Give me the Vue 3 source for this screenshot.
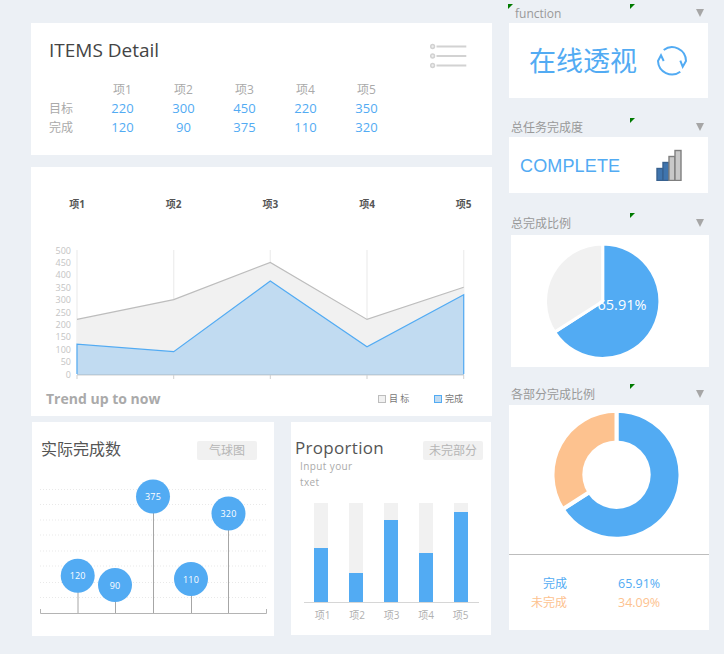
<script setup>
const items = ['项1', '项2', '项3', '项4', '项5']
const target = [220, 300, 450, 220, 350]
const done = [120, 90, 375, 110, 320]

const xs = [77, 173.7, 270.3, 367, 463.7]
const yOf = (v) => 374 - v * 0.248
const line = (d) => d.map((v, i) => `${xs[i]},${yOf(v)}`).join(' ')
const area = (d) => `77,374 ${line(d)} 463.7,374`
const yTicks = [0, 50, 100, 150, 200, 250, 300, 350, 400, 450, 500]

const balloons = [
  { x: 78, cx: 77.7, cy: 575.7, v: 120 },
  { x: 115.5, cx: 115, cy: 585, v: 90 },
  { x: 153.5, cx: 153, cy: 496.5, v: 375 },
  { x: 191.5, cx: 191, cy: 579, v: 110 },
  { x: 228.5, cx: 228.5, cy: 513.5, v: 320 }
]
const gridY = [489.5, 504.5, 520, 535, 551, 566, 582.5, 597.5]

const barHeights = [54.5, 29.5, 83, 49.5, 91]

const polar = (cx, cy, r, deg) => {
  const a = (deg * Math.PI) / 180
  return [cx + r * Math.sin(a), cy - r * Math.cos(a)]
}
const sector = (cx, cy, r, from, to) => {
  const [x1, y1] = polar(cx, cy, r, from)
  const [x2, y2] = polar(cx, cy, r, to)
  const large = to - from > 180 ? 1 : 0
  return `M${cx} ${cy}L${x1} ${y1}A${r} ${r} 0 ${large} 1 ${x2} ${y2}Z`
}
const split = 65.91 * 3.6
const pieBlue = sector(602.7, 301.2, 57.2, 0, split)
const pieGray = sector(602.7, 301.2, 57.2, split, 360)
const donutBlue = sector(616.5, 474.7, 64, 0, split)
const donutOrange = sector(616.5, 474.7, 64, split, 360)
</script>

<template>
  <div class="page">
    <div class="left">
      <section class="card detail">
        <div class="detail-head">
          <h1 class="detail-title">ITEMS Detail</h1>
          <svg class="list-icon" width="38" height="26" viewBox="0 0 38 26" aria-hidden="true">
            <g fill="#eeeeee" stroke="#d2d2d2">
              <circle cx="2.6" cy="3.5" r="1.9" stroke-width="1.5" />
              <circle cx="2.6" cy="13" r="1.9" stroke-width="1.5" />
              <circle cx="2.6" cy="22.5" r="1.9" stroke-width="1.5" />
              <path d="M6.5 3.5H36.3M6.5 13H36.3M6.5 22.5H36.3" stroke-width="1.8" fill="none" />
            </g>
          </svg>
        </div>
        <div class="table">
          <span></span>
          <span v-for="it in items" :key="it" class="th">{{ it }}</span>
          <span class="rowlabel">目标</span>
          <span v-for="(v, i) in target" :key="'t' + i" class="td">{{ v }}</span>
          <span class="rowlabel">完成</span>
          <span v-for="(v, i) in done" :key="'d' + i" class="td">{{ v }}</span>
        </div>
      </section>

      <section class="card trend">
        <svg class="trend-svg" width="461" height="249" viewBox="31 167 461 249">
          <text v-for="(it, i) in items" :key="it" class="cat" :x="xs[i]" y="208" text-anchor="middle">{{ it }}</text>
          <path v-for="x in xs" :key="x" :d="`M${x} 250V374`" stroke="#efefef" stroke-width="1.4" />
          <text v-for="t in yTicks" :key="t" class="tick" x="71" :y="yOf(t) + 3.5" text-anchor="end">{{ t }}</text>
          <polygon :points="area(target)" fill="#f1f1f1" />
          <polyline :points="line(target)" fill="none" stroke="#bdbdbd" stroke-width="1.2" />
          <polygon :points="area(done)" fill="#c1dbf1" />
          <polyline :points="`77,374 ${line(done)} 463.7,374`" fill="none" stroke="#52abf3" stroke-width="1.2" />
          <path d="M77 374.5H464" stroke="#9cc6e8" stroke-width="1" />
          <path d="M77 375H464" stroke="#cfcfcf" stroke-width="1" />
          <path v-for="x in xs" :key="'k' + x" :d="`M${x} 375V379`" stroke="#cfcfcf" stroke-width="1" />
          <text class="trend-title" x="46" y="404">Trend up to now</text>
          <rect x="378.5" y="395.5" width="7" height="7" fill="#f1f1f1" stroke="#bdbdbd" />
          <text class="legend" x="389" y="402">目 标</text>
          <rect x="434.5" y="395.5" width="7" height="7" fill="#c1dbf1" stroke="#52abf3" />
          <text class="legend" x="445" y="402">完成</text>
        </svg>
      </section>

      <div class="bottom">
        <section class="card balloon">
          <div class="card-head">
            <h2 class="cn-title">实际完成数</h2>
            <span class="badge">气球图</span>
          </div>
          <svg class="balloon-svg" width="242" height="171" viewBox="32 465 242 171">
            <path v-for="y in gridY" :key="y" :d="`M40 ${y}H267`" stroke="#e9e9e9" stroke-width="1" stroke-dasharray="1 2" />
            <path d="M40.5 609V613.5H266.5V609" fill="none" stroke="#b4b4b4" stroke-width="1" />
            <g v-for="b in balloons" :key="b.v">
              <path :d="`M${b.x} ${b.cy}V613`" stroke="#a6a6a6" stroke-width="1" />
              <circle :cx="b.cx" :cy="b.cy" r="17" fill="#52abf3" />
              <text class="bubble" :x="b.cx" :y="b.cy + 3.5" text-anchor="middle">{{ b.v }}</text>
            </g>
          </svg>
        </section>

        <section class="card proportion">
          <div class="card-head prop-head">
            <h2 class="prop-title">Proportion</h2>
            <span class="badge">未完部分</span>
          </div>
          <p class="input-text">Input your<br />txet</p>
          <div class="bars">
            <div v-for="(h, i) in barHeights" :key="i" class="bar">
              <div class="bar-fill" :style="{ height: h + '%' }"></div>
            </div>
          </div>
          <div class="bar-labels">
            <span v-for="it in items" :key="it">{{ it }}</span>
          </div>
        </section>
      </div>
    </div>

    <div class="right">
      <i class="mark m1"></i><i class="mark m2"></i><i class="mark m3"></i><i class="mark m4"></i><i class="mark m5"></i>

      <div class="head h1"><span>function</span><i class="caret"></i></div>
      <div class="panel p-func">
        <span class="func-text">在线透视</span>
        <svg width="34" height="34" viewBox="0 0 34 34" aria-hidden="true">
          <g fill="none" stroke="#52abf3" stroke-width="2">
            <path d="M8.7 6A14 14 0 0 1 31 17L27.7 22.7L25.3 16.7" />
            <path d="M25.3 27.7A14 14 0 0 1 3 17L6 11.3L8.7 17" />
          </g>
        </svg>
      </div>

      <div class="head h2"><span>总任务完成度</span><i class="caret"></i></div>
      <div class="panel p-complete">
        <span class="complete-text">COMPLETE</span>
        <svg width="26" height="32" viewBox="0 0 26 32" aria-hidden="true">
          <rect x="1" y="19.5" width="6" height="12" fill="#3f74ad" stroke="#38618f" stroke-width="1.4" />
          <rect x="7" y="13.5" width="6" height="18" fill="#3f74ad" stroke="#38618f" stroke-width="1.4" />
          <rect x="13" y="7.5" width="6" height="24" fill="#c8c8c8" stroke="#7f7f7f" stroke-width="1.4" />
          <rect x="19" y="1.5" width="6" height="30" fill="#c8c8c8" stroke="#7f7f7f" stroke-width="1.4" />
        </svg>
      </div>

      <div class="head h3"><span>总完成比例</span><i class="caret"></i></div>
      <div class="panel p-pie">
        <svg width="198" height="132" viewBox="511 235 198 132">
          <path :d="pieBlue" fill="#52abf3" stroke="#fff" stroke-width="3" />
          <path :d="pieGray" fill="#f1f1f1" stroke="#fff" stroke-width="3" />
          <text class="pie-label" x="622" y="310" text-anchor="middle">65.91%</text>
        </svg>
      </div>

      <div class="head h4"><span>各部分完成比例</span><i class="caret"></i></div>
      <div class="panel p-donut">
        <svg width="200" height="138" viewBox="509 405 200 138">
          <path :d="donutBlue" fill="#52abf3" stroke="#fff" stroke-width="4" />
          <path :d="donutOrange" fill="#fdc28f" stroke="#fff" stroke-width="4" />
          <circle cx="616.5" cy="474.7" r="34.2" fill="#fff" />
        </svg>
        <div class="donut-legend">
          <span class="lg-name blue">完成</span><span class="lg-val blue">65.91%</span>
          <span class="lg-name orange">未完成</span><span class="lg-val orange">34.09%</span>
        </div>
      </div>
    </div>
  </div>
</template>

<style>
body {
  margin: 0;
  background: #ecf0f5;
}
</style>

<style scoped>
.page {
  width: 724px;
  height: 654px;
  overflow: hidden;
  display: flex;
  align-items: flex-start;
  background: #ecf0f5;
  font-family: "Open Sans", "Noto Sans CJK SC", sans-serif;
  color: #aaa;
}
h1, h2, p { margin: 0; font-weight: 400; }
.left {
  width: 461px;
  margin: 23px 0 0 31px;
}
.card { background: #fff; }

.detail {
  height: 132px;
  box-sizing: border-box;
  padding: 14px 0 0 18px;
}
.detail-head {
  display: flex;
  justify-content: space-between;
  align-items: flex-start;
  padding-right: 24px;
  height: 42px;
}
.detail-title {
  font-size: 19px;
  line-height: 26px;
  color: #444;
}
.list-icon { margin-top: 6px; }
.table {
  display: grid;
  grid-template-columns: 43px repeat(5, 61px);
  grid-auto-rows: 19px;
  font-size: 13px;
  line-height: 19px;
  margin-top: 1px;
}
.th { text-align: center; color: #aaa; font-size: 12px; }
.td { text-align: center; color: #52abf3; }
.rowlabel { color: #aaa; font-size: 12px; }

.trend { height: 249px; margin-top: 12px; }
.trend-svg, .balloon-svg { display: block; }
.cat { font-size: 10px; font-weight: 700; fill: #555; }
.tick { font-size: 9px; fill: #c4c4c4; }
.trend-title { font-size: 14px; font-weight: 700; fill: #aaa; }
.legend { font-size: 9px; fill: #777; }

.bottom {
  display: flex;
  align-items: flex-start;
  margin-top: 6px;
}
.balloon {
  width: 242px;
  height: 214px;
  margin-left: 1px;
}
.card-head {
  display: flex;
  justify-content: space-between;
  align-items: flex-start;
  height: 43px;
  box-sizing: border-box;
  padding: 0 17px 0 9px;
}
.cn-title { font-size: 16px; line-height: 24px; color: #555; margin-top: 15px; }
.badge {
  width: 60px;
  height: 19px;
  line-height: 19px;
  margin-top: 19px;
  text-align: center;
  font-size: 12px;
  color: #b5b5b5;
  background: #f1f1f1;
  border-radius: 2px;
}
.proportion {
  width: 200px;
  height: 213px;
  margin-left: 17px;
  box-sizing: border-box;
}
.prop-head { padding: 0 8px 0 4px; height: 38px; }
.prop-title { font-size: 17px; line-height: 24px; color: #555; letter-spacing: 0.3px; margin-top: 14px; }
.input-text {
  font-size: 10px;
  line-height: 16px;
  letter-spacing: 0.4px;
  color: #aaa;
  padding-left: 9px;
  margin-top: -2px;
}
.bars {
  display: flex;
  justify-content: space-between;
  align-items: flex-end;
  height: 99px;
  width: 154px;
  margin: 13px 0 0 23px;
}
.bar {
  width: 14px;
  height: 100%;
  display: flex;
  align-items: flex-end;
  background: #f1f1f1;
}
.bar-fill { width: 100%; background: #52abf3; }
.bar-labels {
  display: flex;
  justify-content: space-between;
  width: 175px;
  box-sizing: border-box;
  margin-left: 13px;
  padding: 4px 8px 0;
  border-top: 1px solid #d6d6d6;
  font-size: 10px;
  color: #b0b0b0;
}
.bar-labels span { width: 21px; text-align: center; }

.right {
  position: relative;
  width: 200px;
  margin-left: 17px;
}
.mark {
  position: absolute;
  width: 5px;
  height: 5px;
  background: #007a00;
  clip-path: polygon(0 0, 100% 0, 0 100%);
}
.m1 { left: -1px; top: 4px; }
.m2 { left: 121px; top: 4px; }
.m3 { left: 121px; top: 118px; }
.m4 { left: 121px; top: 213px; }
.m5 { left: 121px; top: 384px; }
.head {
  display: flex;
  justify-content: space-between;
  align-items: center;
  height: 20px;
  font-size: 12px;
  color: #999;
  padding: 0 5px 0 2px;
}
.head.h1 { margin-top: 3px; padding-left: 6px; }
.head.h2 { margin-top: 19px; height: 20px; }
.head.h3 { margin-top: 17px; height: 25px; }
.head.h4 { margin-top: 16px; height: 22px; }
.caret {
  width: 0;
  height: 0;
  border-left: 4px solid transparent;
  border-right: 4px solid transparent;
  border-top: 8px solid #a6a6a6;
}
.panel { background: #fff; }
.p-func {
  width: 199px;
  height: 75px;
  display: flex;
  align-items: center;
  box-sizing: border-box;
  padding-left: 20px;
  gap: 18px;
}
.func-text { font-size: 27px; line-height: 36px; color: #52abf3; }
.p-complete {
  width: 199px;
  height: 56px;
  display: flex;
  align-items: center;
  box-sizing: border-box;
  padding-left: 11px;
  justify-content: space-between;
  padding-right: 26px;
}
.complete-text {
  font-size: 18px;
  color: #52abf3;
  font-family: "Liberation Sans", sans-serif;
  letter-spacing: 0.15px;
  padding-top: 2px;
}
.p-pie { width: 198px; height: 132px; margin-left: 2px; }
.p-pie svg, .p-donut svg { display: block; }
.pie-label { font-size: 14.5px; fill: #fff; }
.p-donut { width: 200px; height: 225px; }
.donut-legend {
  border-top: 1px solid #bdbdbd;
  margin-top: 11px;
  padding-top: 19px;
  display: grid;
  grid-template-columns: 58px 1fr;
  column-gap: 51px;
  grid-auto-rows: 19px;
  font-size: 12px;
  line-height: 19px;
}
.lg-name { text-align: right; }
.lg-val { font-size: 12.5px; }
.blue { color: #52abf3; }
.orange { color: #fdc28f; }
.bubble { font-size: 9px; fill: #fff; letter-spacing: 0.2px; }
.pie-label, .bubble, .tick, .cat, .legend, .trend-title { font-family: "Open Sans", "Noto Sans CJK SC", sans-serif; }
</style>
